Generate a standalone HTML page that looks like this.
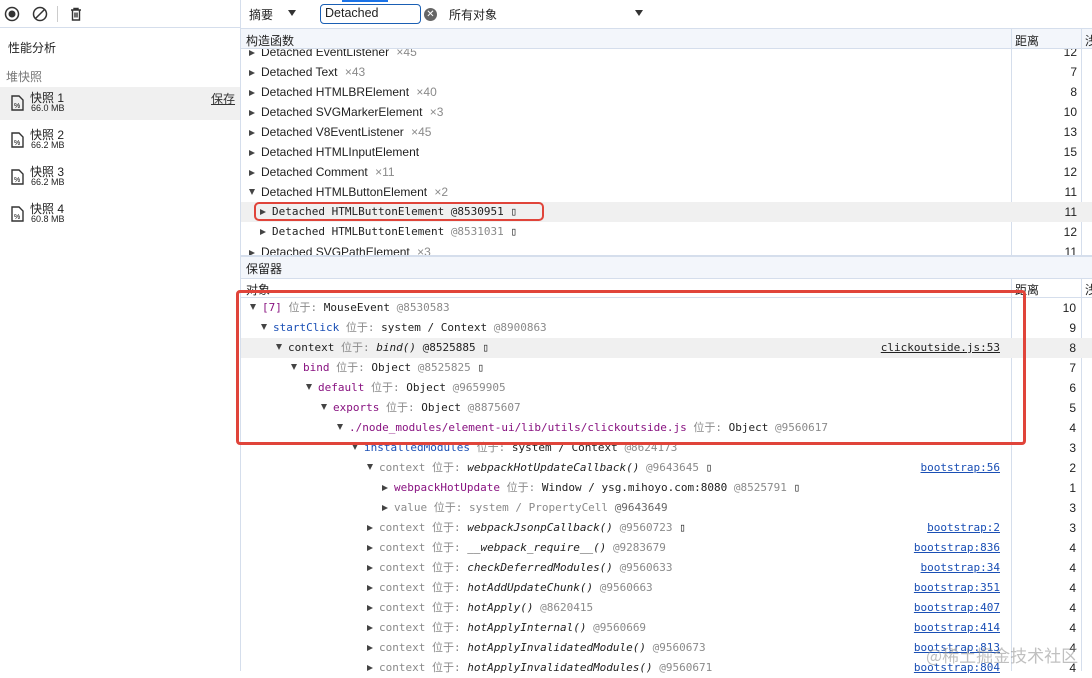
<!DOCTYPE html>
<html><head><meta charset="utf-8"><style>
*{margin:0;padding:0;box-sizing:border-box}
body{width:1092px;height:671px;overflow:hidden;background:#fff;font-family:"Liberation Sans","Noto Sans CJK SC",sans-serif;font-size:12px;color:#1f1f1f;position:relative}
.a{position:absolute;white-space:nowrap}
.m{font-family:"DejaVu Sans Mono","Liberation Mono","Noto Sans CJK SC",monospace;font-size:11px}
.g{color:#8a8a8a}
.tri{display:inline-block;width:0;height:0;border-left:6px solid #444;border-top:3.5px solid transparent;border-bottom:3.5px solid transparent;margin-right:6px;vertical-align:0}
.dn{display:inline-block;width:0;height:0;border-top:6px solid #444;border-left:3.5px solid transparent;border-right:3.5px solid transparent;margin-right:6px;vertical-align:1px}
.pl{color:#881280}.bl{color:#1a4fb5}.lk{color:#1a4fb5;text-decoration:underline}
.num{position:absolute;right:12px;text-align:right;width:60px}
.hl{position:absolute;height:1px;background:#d5deec}
.vl{position:absolute;width:1px;background:#d5deec}
</style></head><body>
<!-- left sidebar -->
<div class="a" style="left:0;top:0;width:241px;height:28px;border-bottom:1px solid #d5deec"></div>
<svg class="a" style="left:4px;top:6px" width="16" height="16"><circle cx="8" cy="8" r="6.5" fill="none" stroke="#333" stroke-width="1.5"/><circle cx="8" cy="8" r="3.5" fill="#333"/></svg>
<svg class="a" style="left:32px;top:6px" width="16" height="16"><circle cx="8" cy="8" r="6.5" fill="none" stroke="#333" stroke-width="1.5"/><line x1="3.5" y1="12.5" x2="12.5" y2="3.5" stroke="#333" stroke-width="1.5"/></svg>
<div class="a" style="left:57px;top:6px;width:1px;height:16px;background:#ccc"></div>
<svg class="a" style="left:68px;top:6px" width="16" height="16"><path d="M3 4h10M6 4V2.5h4V4M4.5 4v10h7V4M7 6.5v5M9 6.5v5" fill="none" stroke="#333" stroke-width="1.4"/></svg>
<div class="a" style="left:8px;top:39px;font-size:12px">性能分析</div>
<div class="a" style="left:6px;top:68px;color:#777">堆快照</div>
<div class="a" style="left:0;top:87px;width:241px;height:33px;background:#f0f0f0"></div>
<div class="a" style="left:211px;top:90px;text-decoration:underline;color:#333">保存</div>
<div class="a" style="left:10px;top:94px"><svg width="15" height="18"><path d="M2 2h7l4 4v10H2z" fill="none" stroke="#333" stroke-width="1.4"/><text x="4" y="14" font-size="7" font-family="Liberation Sans">%</text></svg></div>
<div class="a" style="left:30px;top:89px;font-size:12px">快照 1</div><div class="a" style="left:31px;top:103px;font-size:9px">66.0 MB</div>
<div class="a" style="left:10px;top:131px"><svg width="15" height="18"><path d="M2 2h7l4 4v10H2z" fill="none" stroke="#333" stroke-width="1.4"/><text x="4" y="14" font-size="7" font-family="Liberation Sans">%</text></svg></div>
<div class="a" style="left:30px;top:126px">快照 2</div><div class="a" style="left:31px;top:140px;font-size:9px">66.2 MB</div>
<div class="a" style="left:10px;top:168px"><svg width="15" height="18"><path d="M2 2h7l4 4v10H2z" fill="none" stroke="#333" stroke-width="1.4"/><text x="4" y="14" font-size="7" font-family="Liberation Sans">%</text></svg></div>
<div class="a" style="left:30px;top:163px">快照 3</div><div class="a" style="left:31px;top:177px;font-size:9px">66.2 MB</div>
<div class="a" style="left:10px;top:205px"><svg width="15" height="18"><path d="M2 2h7l4 4v10H2z" fill="none" stroke="#333" stroke-width="1.4"/><text x="4" y="14" font-size="7" font-family="Liberation Sans">%</text></svg></div>
<div class="a" style="left:30px;top:200px">快照 4</div><div class="a" style="left:31px;top:214px;font-size:9px">60.8 MB</div>
<div class="vl" style="left:240px;top:0;height:671px"></div>
<!-- right toolbar -->
<div class="a" style="left:342px;top:0;width:46px;height:2px;background:#1a73e8"></div>
<div class="hl" style="left:241px;top:28px;width:851px"></div>
<div class="a" style="left:249px;top:6px">摘要</div>
<div class="a" style="left:288px;top:10px;width:0;height:0;border-top:6px solid #333;border-left:4px solid transparent;border-right:4px solid transparent"></div>
<div class="a" style="left:320px;top:4px;width:101px;height:20px;border:1.5px solid #1a5fb4;border-radius:4px;padding:1px 4px;font-size:12.5px">Detached</div>
<div class="a" style="left:424px;top:8px;width:13px;height:13px;border-radius:50%;background:#666;color:#fff;font-size:10px;line-height:13px;text-align:center">✕</div>
<div class="a" style="left:449px;top:6px">所有对象</div>
<div class="a" style="left:635px;top:10px;width:0;height:0;border-top:6px solid #333;border-left:4px solid transparent;border-right:4px solid transparent"></div>
<!-- constructor header -->
<div class="a" style="left:241px;top:29px;width:851px;height:20px;background:#f3f6fb;border-bottom:1px solid #d5deec"></div>
<div class="a" style="left:246px;top:32px">构造函数</div>
<div class="a" style="left:1015px;top:32px">距离</div><div class="a" style="left:1085px;top:32px">浅</div>
<div class="vl" style="left:1011px;top:29px;height:226px"></div><div class="vl" style="left:1081px;top:29px;height:226px"></div>
<div class="a" style="left:241px;top:49px;width:851px;height:206px;overflow:hidden">
<div style="position:relative;top:-7px">
<div style="position:absolute;left:0;top:160px;width:851px;height:20px;background:#f0f0f0"></div>
</div>
<div class="a" style="left:8px;top:-7px;line-height:20px;font-size:12px">
<div><span class="tri"></span>Detached EventListener <span class="g" style="margin-left:4px">×45</span></div>
<div><span class="tri"></span>Detached Text <span class="g" style="margin-left:4px">×43</span></div>
<div><span class="tri"></span>Detached HTMLBRElement <span class="g" style="margin-left:4px">×40</span></div>
<div><span class="tri"></span>Detached SVGMarkerElement <span class="g" style="margin-left:4px">×3</span></div>
<div><span class="tri"></span>Detached V8EventListener <span class="g" style="margin-left:4px">×45</span></div>
<div><span class="tri"></span>Detached HTMLInputElement</div>
<div><span class="tri"></span>Detached Comment <span class="g" style="margin-left:4px">×11</span></div>
<div><span class="dn"></span>Detached HTMLButtonElement <span class="g" style="margin-left:4px">×2</span></div>
<div class="m" style="padding-left:11px"><span class="tri"></span>Detached HTMLButtonElement @8530951 ▯</div>
<div class="m" style="padding-left:11px"><span class="tri"></span>Detached HTMLButtonElement <span class="g">@8531031</span> ▯</div>
<div><span class="tri"></span>Detached SVGPathElement <span class="g" style="margin-left:4px">×3</span></div>
</div>
<div class="a" style="left:770px;top:-7px;width:66px;text-align:right;line-height:20px">12<br>7<br>8<br>10<br>13<br>15<br>12<br>11<br>11<br>12<br>11</div>
</div>
<!-- retainers -->
<div class="a" style="left:241px;top:255px;width:851px;height:24px;background:#f3f6fb;border-top:2px solid #d5deec;border-bottom:1px solid #d5deec"></div>
<div class="a" style="left:246px;top:260px">保留器</div>
<div class="a" style="left:241px;top:279px;width:851px;height:19px;border-bottom:1px solid #d5deec;overflow:hidden"><div style="position:absolute;left:5px;top:2px">对象</div><div style="position:absolute;left:774px;top:2px">距离</div><div style="position:absolute;left:844px;top:2px">浅</div></div>
<div class="vl" style="left:1011px;top:279px;height:392px"></div><div class="vl" style="left:1081px;top:279px;height:392px"></div>
<div class="a" style="left:241px;top:338px;width:851px;height:20px;background:#f0f0f0"></div>
<div class="a m" style="left:0;top:298px;width:1092px;line-height:20px">
<div style="padding-left:250px"><span class="dn"></span><span class="pl">[7]</span> <span class="g">位于:</span> MouseEvent <span class="g">@8530583</span></div>
<div style="padding-left:261px"><span class="dn"></span><span class="bl">startClick</span> <span class="g">位于:</span> system / Context <span class="g">@8900863</span></div>
<div style="padding-left:276px"><span class="dn"></span>context <span class="g">位于:</span> <i>bind()</i> @8525885 ▯</div>
<div style="padding-left:291px"><span class="dn"></span><span class="pl">bind</span> <span class="g">位于:</span> Object <span class="g">@8525825</span> ▯</div>
<div style="padding-left:306px"><span class="dn"></span><span class="pl">default</span> <span class="g">位于:</span> Object <span class="g">@9659905</span></div>
<div style="padding-left:321px"><span class="dn"></span><span class="pl">exports</span> <span class="g">位于:</span> Object <span class="g">@8875607</span></div>
<div style="padding-left:337px"><span class="dn"></span><span class="pl">./node_modules/element-ui/lib/utils/clickoutside.js</span> <span class="g">位于:</span> Object <span class="g">@9560617</span></div>
<div style="padding-left:352px"><span class="dn"></span><span class="bl">installedModules</span> <span class="g">位于:</span> system / Context <span class="g">@8624173</span></div>
<div style="padding-left:367px"><span class="dn"></span><span class="g">context 位于:</span> <i>webpackHotUpdateCallback()</i> <span class="g">@9643645</span> ▯</div>
<div style="padding-left:382px"><span class="tri"></span><span class="pl">webpackHotUpdate</span> <span class="g">位于:</span> Window / ysg.mihoyo.com:8080 <span class="g">@8525791</span> ▯</div>
<div style="padding-left:382px" class="g"><span class="tri"></span>value 位于: system / PropertyCell <span style="color:#666">@9643649</span></div>
<div style="padding-left:367px"><span class="tri"></span><span class="g">context 位于:</span> <i>webpackJsonpCallback()</i> <span class="g">@9560723</span> ▯</div>
<div style="padding-left:367px"><span class="tri"></span><span class="g">context 位于:</span> <i>__webpack_require__()</i> <span class="g">@9283679</span></div>
<div style="padding-left:367px"><span class="tri"></span><span class="g">context 位于:</span> <i>checkDeferredModules()</i> <span class="g">@9560633</span></div>
<div style="padding-left:367px"><span class="tri"></span><span class="g">context 位于:</span> <i>hotAddUpdateChunk()</i> <span class="g">@9560663</span></div>
<div style="padding-left:367px"><span class="tri"></span><span class="g">context 位于:</span> <i>hotApply()</i> <span class="g">@8620415</span></div>
<div style="padding-left:367px"><span class="tri"></span><span class="g">context 位于:</span> <i>hotApplyInternal()</i> <span class="g">@9560669</span></div>
<div style="padding-left:367px"><span class="tri"></span><span class="g">context 位于:</span> <i>hotApplyInvalidatedModule()</i> <span class="g">@9560673</span></div>
<div style="padding-left:367px"><span class="tri"></span><span class="g">context 位于:</span> <i>hotApplyInvalidatedModules()</i> <span class="g">@9560671</span></div>
</div>
<div class="a m" style="left:800px;top:298px;width:200px;text-align:right;line-height:20px">
<br><br><span style="color:#222;text-decoration:underline">clickoutside.js:53</span><br><br><br><br><br><br>
<span class="lk">bootstrap:56</span><br><br><br>
<span class="lk">bootstrap:2</span><br><span class="lk">bootstrap:836</span><br><span class="lk">bootstrap:34</span><br><span class="lk">bootstrap:351</span><br><span class="lk">bootstrap:407</span><br><span class="lk">bootstrap:414</span><br><span class="lk">bootstrap:813</span><br><span class="lk">bootstrap:804</span>
</div>
<div class="a" style="left:1010px;top:298px;width:66px;text-align:right;line-height:20px">10<br>9<br>8<br>7<br>6<br>5<br>4<br>3<br>2<br>1<br>3<br>3<br>4<br>4<br>4<br>4<br>4<br>4<br>4</div>
<!-- red boxes -->
<div class="a" style="left:254px;top:202px;width:290px;height:19px;border:2.5px solid #e0443a;border-radius:5px"></div>
<div class="a" style="left:236px;top:290px;width:790px;height:155px;border:3px solid #e0443a;border-radius:4px"></div>
<div class="a" style="left:926px;top:642px;font-size:17px;color:rgba(150,150,150,.6);font-family:'Noto Sans CJK SC',sans-serif">@稀土掘金技术社区</div>
</body></html>
